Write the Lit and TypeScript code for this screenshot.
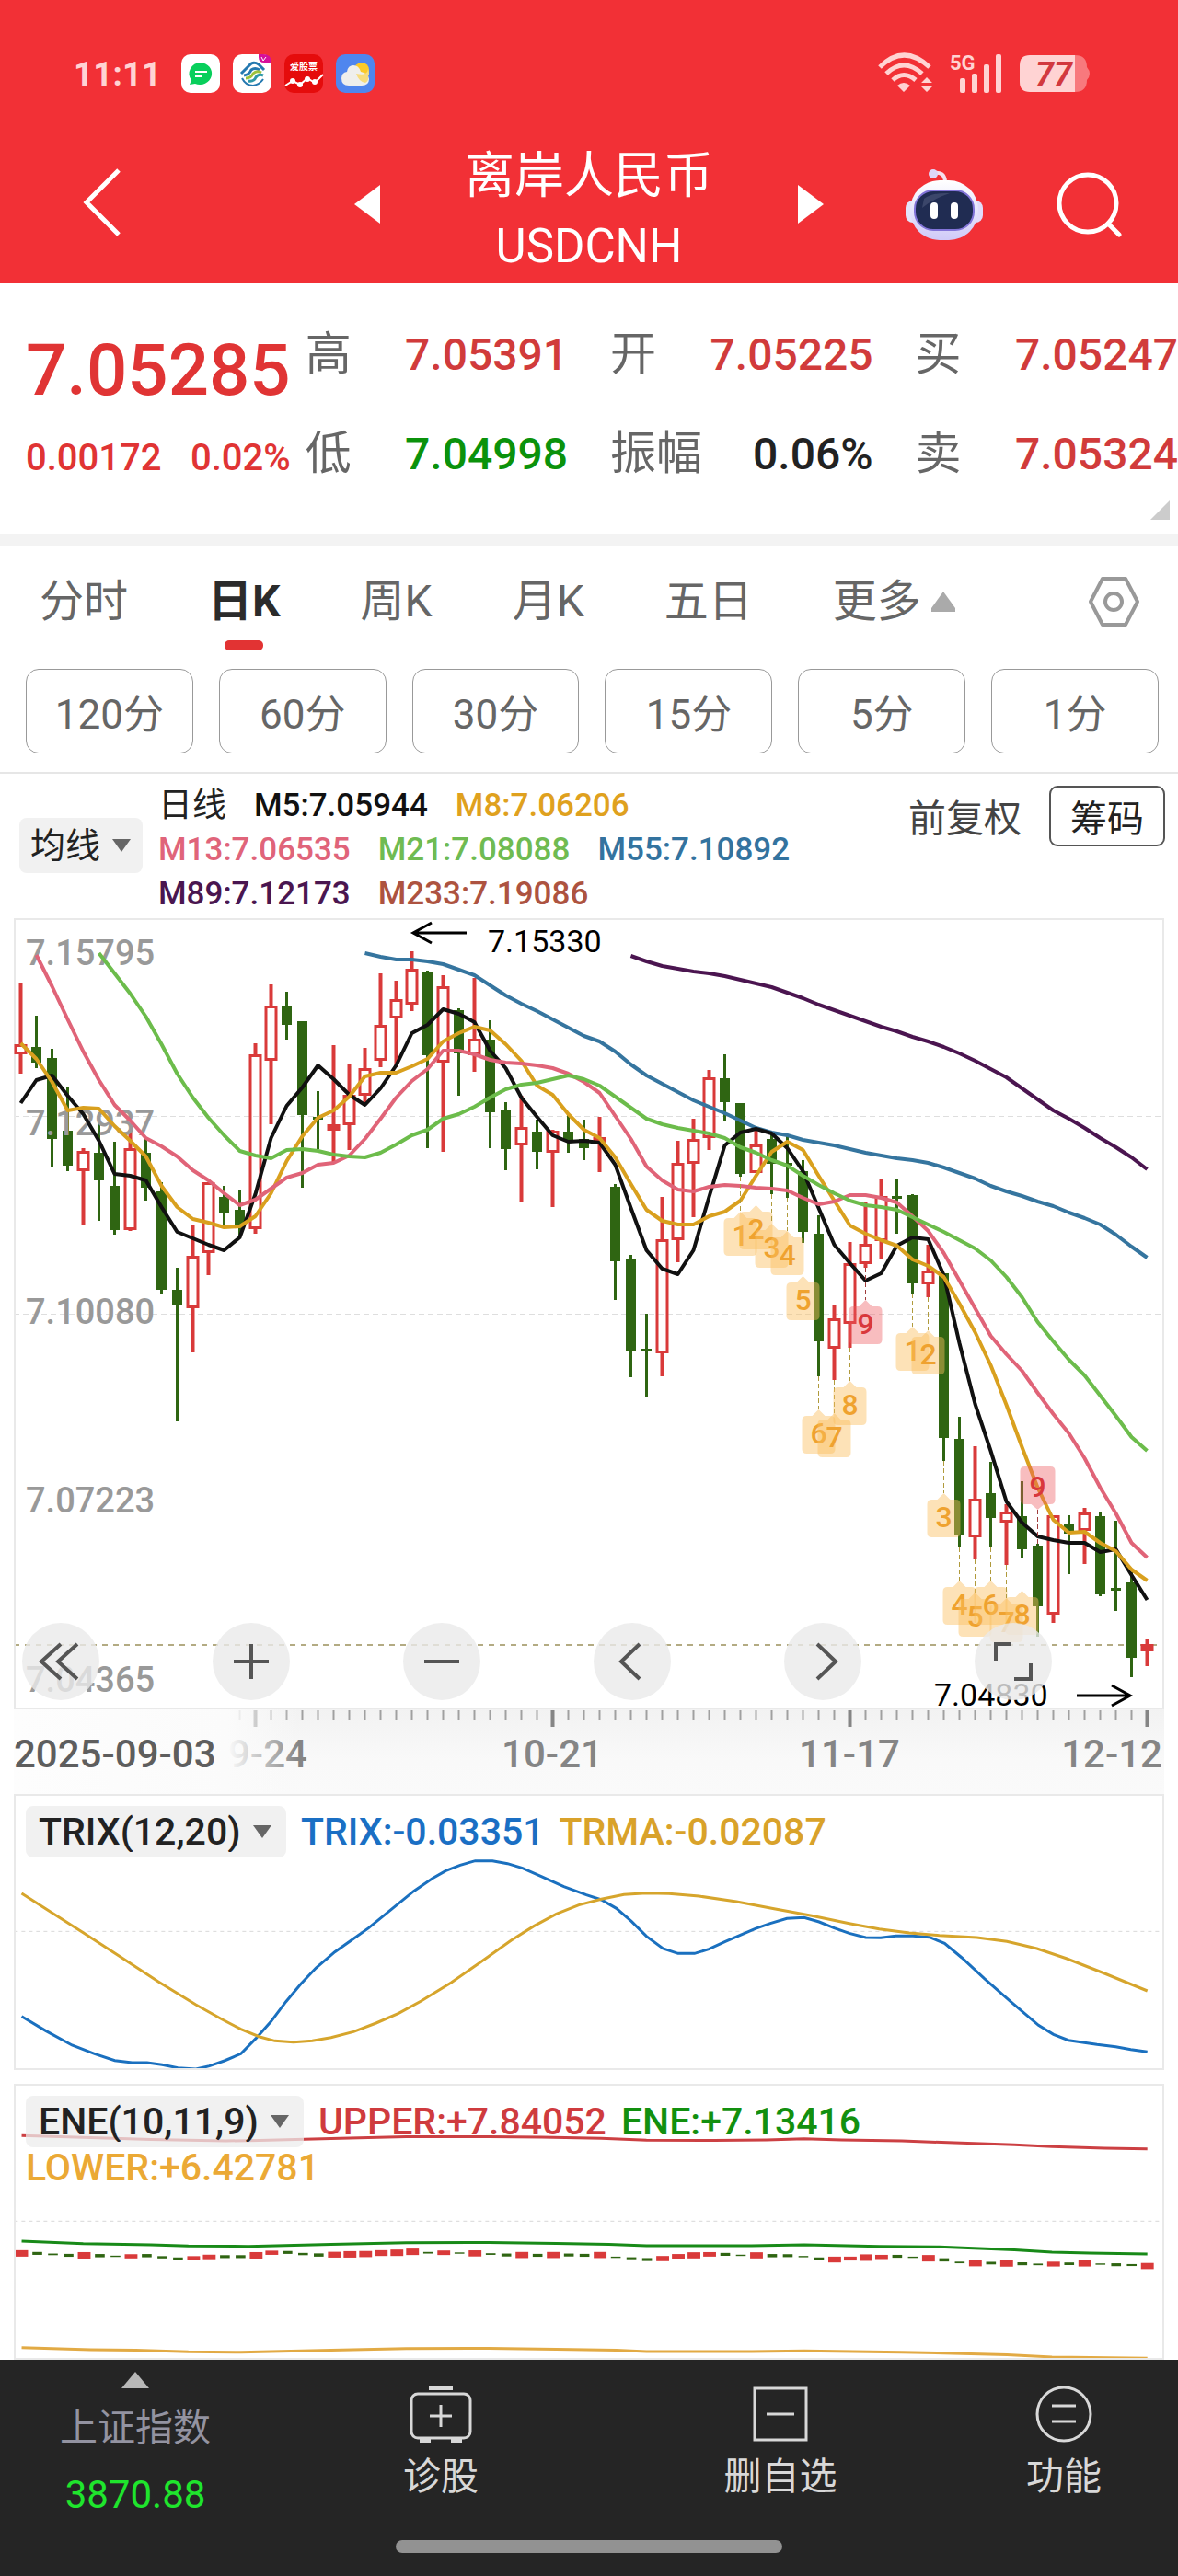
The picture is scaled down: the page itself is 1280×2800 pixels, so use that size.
import { LitElement, html, svg, css } from "lit";
import { customElement, state } from "lit/decorators.js";

type Candle = [kind: "r" | "g", high: number, top: number, bottom: number, low: number];

const STEP = 17;
const FIRST = 7.5;
const slotX = (i: number) => FIRST + STEP * i;

// Daily candles on the 1250 x 860 price canvas.
const CANDLES: Candle[] = [
  ["r", 70, 137, 148, 169], ["g", 106, 140, 157, 163], ["g", 142, 152, 240, 270], ["g", 184, 231, 269, 275],
  ["r", 250, 253, 275, 334], ["g", 223, 255, 285, 329], ["g", 243, 291, 339, 344], ["r", 230, 250, 339, 340],
  ["g", 240, 255, 293, 307], ["g", 287, 297, 404, 409], ["g", 380, 404, 421, 547], ["r", 333, 367, 424, 472],
  ["r", 287, 287, 364, 388], ["g", 291, 303, 320, 335], ["g", 295, 317, 335, 346], ["r", 136, 148, 338, 343],
  ["r", 72, 95, 155, 224], ["g", 80, 96, 116, 132], ["g", 112, 112, 214, 293], ["g", 188, 216, 219, 251],
  ["r", 138, 224, 231, 265], ["r", 158, 192, 225, 252], ["r", 141, 163, 193, 203], ["r", 60, 116, 155, 162],
  ["r", 68, 88, 109, 162], ["r", 36, 55, 94, 101], ["g", 57, 59, 149, 250], ["r", 62, 74, 157, 254],
  ["g", 98, 100, 147, 193], ["r", 65, 131, 149, 167], ["g", 111, 132, 211, 250], ["g", 200, 208, 251, 274],
  ["r", 193, 227, 247, 308], ["g", 219, 232, 254, 273], ["r", 230, 231, 255, 314], ["g", 213, 232, 242, 255],
  ["g", 219, 240, 250, 263], ["r", 216, 238, 244, 276], ["g", 289, 292, 373, 415], ["g", 366, 371, 471, 499],
  ["g", 430, 468, 471, 521], ["r", 303, 349, 473, 498], ["r", 242, 266, 350, 374], ["r", 218, 240, 267, 325],
  ["r", 165, 173, 239, 252], ["g", 148, 174, 200, 220], ["g", 201, 201, 278, 281], ["r", 230, 246, 277, 277],
  ["g", 235, 240, 267, 300], ["g", 237, 266, 269, 304], ["g", 263, 275, 341, 353], ["g", 323, 343, 460, 498],
  ["r", 420, 435, 468, 502], ["r", 352, 375, 441, 467], ["r", 308, 354, 376, 380], ["r", 283, 302, 351, 370],
  ["g", 283, 302, 305, 343], ["g", 300, 301, 397, 408], ["r", 355, 383, 398, 412], ["g", 386, 386, 565, 590],
  ["g", 542, 566, 670, 684], ["r", 574, 631, 673, 697], ["g", 591, 625, 652, 684], ["r", 637, 645, 657, 703],
  ["g", 612, 650, 686, 696], ["g", 680, 682, 748, 781], ["r", 649, 649, 757, 766], ["g", 649, 658, 669, 713],
  ["r", 641, 646, 666, 702], ["g", 646, 650, 735, 737], ["g", 655, 728, 731, 753], ["g", 711, 722, 804, 825],
  ["r", 783, 789, 797, 813],
];

interface Line { start: number; color: string; ys: number[] }

const LINES: Line[] = [
  { start: 39, color: "#4b1550", ys: [41, 47, 52, 55, 58, 60, 63, 67, 71, 75, 81, 87, 94, 100, 106, 112, 118, 123, 129, 134, 140, 147, 155, 164, 173, 185, 197, 209, 218, 228, 239, 249, 260, 273] },
  { start: 22, color: "#35759f", ys: [38, 42, 45, 45, 47, 50, 56, 62, 73, 84, 93, 101, 110, 119, 128, 134, 145, 159, 171, 180, 189, 198, 205, 212, 220, 228, 233, 236, 241, 244, 247, 251, 255, 258, 261, 263, 266, 271, 277, 283, 291, 297, 302, 308, 313, 320, 326, 333, 344, 357, 369] },
  { start: 0, color: "#111111", ys: [201, 176, 171, 193, 213, 242, 278, 280, 285, 314, 341, 348, 355, 361, 347, 300, 239, 204, 184, 160, 175, 192, 203, 185, 160, 125, 116, 99, 104, 113, 144, 163, 195, 216, 236, 243, 242, 244, 268, 315, 361, 381, 387, 361, 303, 247, 233, 229, 234, 250, 275, 315, 355, 375, 394, 386, 356, 347, 349, 388, 462, 528, 579, 634, 657, 672, 676, 679, 679, 689, 686, 714, 741] },
  { start: 0, color: "#d9a01e", ys: [136, 153, 178, 209, 206, 207, 226, 242, 259, 291, 314, 327, 331, 336, 335, 324, 299, 264, 237, 217, 209, 194, 172, 168, 168, 161, 153, 134, 125, 118, 122, 137, 155, 182, 192, 213, 230, 239, 260, 289, 317, 329, 333, 333, 324, 319, 307, 280, 254, 243, 252, 280, 307, 334, 343, 350, 356, 371, 378, 390, 419, 450, 486, 529, 575, 619, 654, 668, 667, 679, 688, 708, 720] },
  { start: 1, color: "#e06478", ys: [40, 74, 110, 145, 176, 203, 220, 239, 248, 259, 274, 285, 299, 312, 306, 294, 282, 277, 268, 266, 258, 240, 218, 195, 177, 164, 144, 144, 148, 154, 157, 158, 160, 163, 169, 178, 190, 215, 240, 270, 285, 295, 297, 292, 290, 291, 293, 294, 296, 304, 311, 308, 301, 301, 304, 309, 324, 340, 364, 394, 424, 454, 474, 492, 516, 539, 560, 587, 619, 647, 679, 695] },
  { start: 5, color: "#6cbc4b", ys: [38, 60, 82, 107, 137, 169, 195, 217, 236, 253, 258, 261, 252, 251, 253, 257, 259, 260, 255, 246, 236, 230, 218, 213, 205, 195, 186, 181, 179, 175, 171, 175, 182, 194, 206, 218, 224, 228, 231, 234, 239, 249, 255, 263, 269, 280, 290, 299, 307, 312, 314, 317, 325, 333, 341, 350, 359, 372, 390, 412, 439, 460, 480, 497, 519, 541, 564, 579] },
];

// Sequence counters hung below their candles: slot, tip y, number.
const TAGS: [number, number, number][] = [
  [46, 319, 1], [47, 312, 2], [48, 332, 3], [49, 340, 4], [50, 389, 5], [51, 534, 6], [52, 538, 7], [53, 503, 8],
  [57, 444, 1], [58, 448, 2], [59, 625, 3], [60, 720, 4], [61, 733, 5], [62, 720, 6], [63, 739, 7], [64, 731, 8],
];

const PRICE_LABELS: [string, number][] = [
  ["7.15795", 51], ["7.12937", 236], ["7.10080", 441], ["7.07223", 646], ["7.04365", 841],
];

const TRIX = "28,758 60,805 95,852 125,880 152,902 175,909 195,909 215,916 236,926 260,930 278,920 298,903 320,880 340,830 360,775 380,710 400,652 420,600 445,548 470,505 490,470 520,410 550,350 575,308 593,283 612,265 632,251 655,251 675,260 695,275 720,302 750,335 780,362 800,378 820,406 840,448 860,497 882,537 902,553 924,553 943,539 965,514 985,493 1005,472 1025,455 1047,439 1070,436 1090,450 1110,470 1130,487 1152,501 1172,502 1192,496 1215,496 1237,500 1257,520 1280,567 1310,635 1345,710 1382,787 1402,817 1422,836 1460,850 1485,857 1505,866 1527,874";
const TRMA = "28,357 60,407 110,485 160,565 210,645 260,720 295,768 320,800 345,825 365,838 390,842 415,838 440,827 470,808 500,780 530,748 560,708 600,648 640,580 680,510 710,464 740,424 770,395 800,376 830,361 860,356 890,358 930,366 980,384 1030,407 1080,430 1130,455 1170,473 1210,486 1250,494 1300,501 1340,514 1380,537 1420,570 1470,618 1527,675";
const UPPER = "28,206 130,213 200,218 300,222 345,221 440,215 540,209 650,209 720,211 800,214 860,220 950,221 1020,219 1070,216 1120,219 1200,222 1270,228 1350,234 1400,240 1470,245 1527,247";
const ENE = "28,533 110,541 200,544 250,548 330,549 440,543 540,538 650,537 740,540 810,543 860,547 1000,547 1070,544 1170,549 1250,551 1350,560 1400,567 1450,570 1527,573";
const LOWER = "28,863 120,869 180,871 250,876 320,877 440,871 540,866 650,865 740,868 820,871 860,875 1000,875 1070,873 1200,877 1340,885 1400,892 1527,896";

// Compressed candles of the ENE panel: centre and height, coloured like the daily candles.
const ENE_BARS: [number, number][] = [
  [571, 20], [571, 9], [574, 5], [577, 9], [577, 20], [578, 10], [580, 4], [580, 13], [578, 10], [583, 7],
  [588, 9], [586, 13], [582, 14], [581, 9], [581, 9], [577, 20], [569, 13], [568, 9], [573, 7], [576, 10],
  [575, 18], [574, 20], [573, 19], [570, 18], [569, 20], [566, 20], [569, 5], [569, 14], [570, 4], [571, 19],
  [573, 5], [576, 9], [576, 19], [577, 9], [576, 19], [576, 9], [577, 9], [576, 19], [583, 4], [586, 6],
  [590, 9], [587, 16], [580, 14], [577, 19], [574, 14], [574, 9], [577, 4], [577, 19], [578, 10], [578, 9],
  [581, 4], [587, 7], [590, 18], [587, 12], [584, 20], [582, 13], [580, 9], [583, 4], [586, 20], [591, 10],
  [599, 5], [601, 20], [601, 8], [602, 20], [603, 9], [605, 5], [604, 15], [603, 8], [602, 19], [604, 4],
  [606, 9], [607, 6], [610, 19],
];

const RED = "#d93a3a";
const GREEN = "#2f6512";

const FONT = css`Roboto, "Noto Sans CJK SC", sans-serif`;

@customElement("price-chart")
export class PriceChart extends LitElement {
  static styles = css`
    :host { display: block; font-family: ${FONT}; }
    .canvas { position: relative; }
    .plot, .axis { display: block; width: 100%; height: auto; overflow: visible; }
    .scale { font-size: 38px; font-weight: 500; fill: #999; }
    .mark { font-size: 34px; fill: #000; }
    .tag { font-size: 32px; font-weight: 500; text-anchor: middle; }
    .date { font-size: 42px; font-weight: 500; fill: #858585; }
    .from { fill: #5e5e5e; }
    .tools {
      position: absolute; left: 0; right: 0; bottom: 10px;
      display: flex; justify-content: space-between; padding: 0 122px 0 9px;
    }
    .tool {
      width: 84px; height: 84px; padding: 0; border: 0; border-radius: 50%;
      background: rgba(234, 234, 234, 0.8); display: grid; place-items: center;
    }
    .glyph { width: 84px; height: 84px; fill: none; stroke: #555; stroke-width: 4; }
  `;

  private candle([kind, high, top, bottom, low]: Candle, i: number) {
    const x = slotX(i);
    if (kind === "g") {
      return svg`<path d="M${x} ${high}V${low}" stroke=${GREEN} stroke-width="3"/>
        <rect x=${x - 5.5} y=${top} width="11" height=${bottom - top} fill=${GREEN}/>`;
    }
    if (bottom - top < 9) {
      return svg`<path d="M${x} ${high}V${low}" stroke=${RED} stroke-width="4"/>
        <rect x=${x - 7} y=${top} width="14" height=${bottom - top} fill=${RED}/>`;
    }
    return svg`<path d="M${x} ${high}V${top}M${x} ${bottom}V${low}" stroke=${RED} stroke-width="4"/>
      <rect x=${x - 5.5} y=${top + 1.5} width="11" height=${bottom - top - 3} fill="none" stroke=${RED} stroke-width="3"/>`;
  }

  private line({ start, color, ys }: Line) {
    const points = ys.map((y, k) => `${slotX(start + k)},${y}`).join(" ");
    return svg`<polyline points=${points} fill="none" stroke=${color} stroke-width="4" stroke-linejoin="round"/>`;
  }

  private tagBelow(i: number, tip: number, n: number, hot: boolean) {
    const x = slotX(i);
    const ink = hot ? "#d9383c" : "#efa22f";
    const fill = hot ? "rgba(238,90,96,.4)" : "rgba(250,190,96,.45)";
    return svg`<path d="M${x} ${CANDLES[i][4]}V${tip}" stroke=${hot ? "#a03c3c" : "#b09a3c"} stroke-width="1" stroke-dasharray="5 3"/>
      <path d="M${x} ${tip}l7 7h6q5 0 5 5v31q0 5 -5 5h-26q-5 0 -5 -5v-31q0 -5 5 -5h6z" fill=${fill}/>
      <text class="tag" x=${x} y=${tip + 37} fill=${ink}>${n}</text>`;
  }

  render() {
    const top9 = slotX(65);
    const ticks = Array.from({ length: 60 }, (_, k) => k + 13);
    return html`
      <div class="canvas">
        <svg class="plot" viewBox="0 0 1250 860" role="img" aria-label="日K">
          <g stroke="#dedede" stroke-width="1" stroke-dasharray="6 4">
            <path d="M0 215.5H1250M0 430.5H1250M0 645.5H1250"/>
          </g>
          <path d="M0 790H1250" stroke="#b3ab83" stroke-width="2" stroke-dasharray="6 6"/>
          <rect x="1" y="1" width="1248" height="858" fill="none" stroke="#e9e9e9" stroke-width="2"/>
          ${CANDLES.map((c, i) => this.candle(c, i))}
          ${PRICE_LABELS.map(([t, y]) => svg`<text class="scale" x="13" y=${y}>${t}</text>`)}
          ${LINES.map((l) => this.line(l))}
          ${TAGS.map(([i, tip, n]) => this.tagBelow(i, tip, n, false))}
          ${this.tagBelow(54, 415, 9, true)}
          <path d="M${top9} 643V680" stroke="#a03c3c" stroke-width="1" stroke-dasharray="5 3"/>
          <path d="M${top9} 643l-7 -6h-7q-5 0 -5 -5v-31q0 -5 5 -5h28q5 0 5 5v31q0 5 -5 5h-7z" fill="rgba(238,90,96,.4)"/>
          <text class="tag" x=${top9} y="629" fill="#d9383c">9</text>
          <path d="M492 16H434M454 5L434 16L454 27" fill="none" stroke="#000" stroke-width="3"/>
          <text class="mark" x="515" y="37">7.15330</text>
          <path d="M1155 845H1213M1193 834L1213 845L1193 856" fill="none" stroke="#000" stroke-width="3"/>
          <text class="mark" x="1000" y="856">7.04830</text>
        </svg>
        <div class="tools">
          <button class="tool" aria-label="最早"><svg class="glyph" viewBox="0 0 84 84"><path d="M42 23L21 42L42 61M60 23L39 42L60 61"/></svg></button>
          <button class="tool" aria-label="放大"><svg class="glyph" viewBox="0 0 84 84"><path d="M42 23V61M23 42H61"/></svg></button>
          <button class="tool" aria-label="缩小"><svg class="glyph" viewBox="0 0 84 84"><path d="M23 42H61"/></svg></button>
          <button class="tool" aria-label="左移"><svg class="glyph" viewBox="0 0 84 84"><path d="M50 23L30 42L50 61"/></svg></button>
          <button class="tool" aria-label="右移"><svg class="glyph" viewBox="0 0 84 84"><path d="M36 23L56 42L36 61"/></svg></button>
          <button class="tool" aria-label="全屏"><svg class="glyph" viewBox="0 0 84 84"><path d="M40 23H23V41M61 44V61H43"/></svg></button>
        </div>
      </div>
      <svg class="axis" viewBox="0 0 1250 92" role="img" aria-label="日期">
        <defs>
          <linearGradient id="shade" x1="0" y1="0" x2="0" y2="1">
            <stop offset="0" stop-color="#f2f2f2"/><stop offset="0.6" stop-color="#f9f9f9"/><stop offset="1" stop-color="#fafafa"/>
          </linearGradient>
          <linearGradient id="veil" x1="0" y1="0" x2="1" y2="0">
            <stop offset="0" stop-color="#fdfdfd"/><stop offset="0.75" stop-color="#fbfbfb"/><stop offset="1" stop-color="#fafafa" stop-opacity="0"/>
          </linearGradient>
        </defs>
        <rect width="1250" height="92" fill="url(#shade)"/>
        ${ticks.map((i) => {
          const major = (i - 15) % 19 === 0;
          return svg`<path d="M${slotX(i)} 1V${major ? 19 : 12}" stroke=${major ? "#858585" : "#a0a0a0"} stroke-width=${major ? 4 : 2}/>`;
        })}
        <text class="date" x="264" y="63" text-anchor="middle">09-24</text>
        <text class="date" x="585" y="63" text-anchor="middle">10-21</text>
        <text class="date" x="908" y="63" text-anchor="middle">11-17</text>
        <text class="date" x="1248" y="63" text-anchor="end">12-12</text>
        <rect width="310" height="92" fill="url(#veil)"/>
        <text class="date from" x="0" y="63">2025-09-03</text>
      </svg>
    `;
  }
}

@customElement("indicator-panel")
export class IndicatorPanel extends LitElement {
  static properties = { name: {}, values: { attribute: false } };
  declare name: string;
  declare values: { text: string; color: string }[];

  static styles = css`
    :host { display: block; font-family: ${FONT}; }
    .panel { display: grid; box-sizing: border-box; border: 2px solid #e9e9e9; height: 300px; }
    .drawing { grid-area: 1 / 1; min-height: 0; min-width: 0; overflow: hidden; }
    .legend {
      grid-area: 1 / 1; align-self: start; position: relative;
      display: flex; flex-wrap: wrap; align-items: center; column-gap: 16px; padding: 11px;
      font-size: 41px; line-height: 44px; font-weight: 500; color: #222;
    }
    .choice { display: flex; align-items: center; gap: 13px; height: 56px; padding: 0 16px 0 14px; border-radius: 8px; background: rgba(236, 236, 236, 0.75); }
    .select { appearance: none; border: 0; padding: 0; margin: 0; background: none; font: inherit; color: inherit; }
    .arrow { width: 20px; height: 14px; fill: #666; }
  `;

  render() {
    return html`
      <section class="panel">
        <div class="drawing"><slot></slot></div>
        <div class="legend">
          <label class="choice">
            <select class="select" aria-label="指标"><option>${this.name}</option></select>
            <svg class="arrow" viewBox="0 0 20 14"><path d="M0 0H20L10 14Z"/></svg>
          </label>
          ${this.values.map((v) => html`<span style="color:${v.color}">${v.text}</span>`)}
        </div>
      </section>
    `;
  }
}

@customElement("app-root")
export class AppRoot extends LitElement {
  @state() private tab = 1;

  static styles = css`
    :host { display: flex; flex-direction: column; min-height: 100vh; background: #fff; color: #222; font-family: ${FONT}; }
    button, select { font-family: inherit; }
    button { background: none; border: 0; padding: 0; margin: 0; color: inherit; }
    svg { display: block; overflow: visible; }

    .top { background: #f23036; color: #fff; }
    .status { display: flex; justify-content: space-between; align-items: center; height: 112px; padding: 24px 96px 0 80px; color: #ffd3d3; }
    .cluster { display: flex; align-items: center; gap: 14px; }
    .signals { gap: 18px; }
    .clock { font-size: 37px; font-weight: 700; margin-right: 8px; }
    .app { width: 42px; height: 42px; }
    .nav { display: grid; grid-template-columns: minmax(0, 1fr) auto minmax(0, 1fr); align-items: center; height: 172px; }
    .lead { padding-left: 90px; }
    .trail { display: flex; align-items: center; justify-content: flex-end; gap: 80px; padding-right: 61px; }
    .symbol { display: flex; align-items: center; gap: 92px; }
    .title { margin: 0; padding-top: 16px; text-align: center; font-weight: 400; font-size: 54px; line-height: 76px; }
    .code { display: block; font-size: 51px; }

    .quote { display: flex; gap: 16px; padding: 23px 0 33px 28px; border-bottom: 14px solid #f3f3f3; position: relative; }
    .last { flex: none; color: #e03434; font-weight: 500; }
    .price { font-size: 78px; line-height: 144px; }
    .change { display: flex; justify-content: space-between; font-size: 40px; line-height: 46px; }
    .stats { flex: 1; display: grid; grid-template-columns: repeat(3, 1fr); column-gap: 46px; margin: 0; }
    .stat { display: flex; justify-content: space-between; align-items: center; height: 108px; white-space: nowrap; }
    .stat dt { font-size: 50px; line-height: 72px; color: #666; }
    .stat dd { margin: 0; font-size: 48px; font-weight: 500; color: #222; }
    .stat .up { color: #d13b3b; }
    .stat .down { color: #0b920b; }
    .corner { position: absolute; right: 9px; bottom: 15px; }

    .periods { display: flex; align-items: center; gap: 87px; padding: 0 41px 0 43px; height: 116px; margin-top: 2px; }
    .period { position: relative; font-size: 48px; line-height: 70px; color: #666; display: flex; align-items: center; gap: 11px; white-space: nowrap; }
    .active { color: #2b2b2b; font-weight: 700; }
    .active::after { content: ""; position: absolute; left: 50%; bottom: -18px; width: 42px; height: 11px; margin-left: -21px; border-radius: 5px; background: #e23333; }
    .settings { margin-left: auto; }

    .minutes { display: grid; grid-template-columns: repeat(6, 1fr); gap: 28px; padding: 15px 21px 20px 28px; border-bottom: 2px solid #e6e6e6; }
    .minute { height: 92px; border: 1px solid #999; border-radius: 14px; font-size: 44px; color: #666; }

    .averages { display: flex; align-items: flex-start; gap: 17px; padding: 11px 14px 2px 21px; }
    .choice { display: flex; align-items: center; gap: 12px; height: 60px; margin-top: 37px; padding: 0 13px 0 12px; border-radius: 8px; background: #f1f1f1; }
    .select { appearance: none; border: 0; padding: 0; margin: 0; background: none; font-size: 38px; color: #222; }
    .legend { font-size: 35px; line-height: 48px; font-weight: 500; }
    .row { display: flex; gap: 30px; }
    .term { font-size: 37px; font-weight: 400; }
    .rights { display: flex; align-items: center; gap: 30px; margin-left: auto; }
    .adjust { color: #444; font-size: 41px; }
    .chips { height: 66px; margin-top: 2px; padding: 0 21px; border: 2px solid #555; border-radius: 9px; font-size: 40px; color: #222; }

    .charts { padding: 0 15px; flex: 1; }
    .ene { margin-top: 15px; }
    .curve { width: 100%; height: 296px; fill: none; stroke-width: 3; }

    .dock { background: #252525; color: #d8d8d8; height: 235px; display: flex; flex-direction: column; align-items: center; justify-content: space-between; }
    .actions { width: 100%; display: grid; grid-template-columns: 294fr 370fr 368fr 248fr; }
    .action { display: flex; flex-direction: column; align-items: center; font-size: 41px; line-height: 60px; padding-top: 28px; gap: 7px; }
    .index { padding-top: 13px; gap: 13px; color: #9393a1; }
    .level { color: #1fe52d; font-size: 42px; }
    .icon { fill: none; stroke: #d8d8d8; stroke-width: 3; }
    .home { width: 420px; height: 14px; border-radius: 7px; background: #929292; margin-bottom: 25px; }
  `;

  private stat(label: string, value: string, tone = "") {
    return html`<div class="stat"><dt>${label}</dt><dd class=${tone}>${value}</dd></div>`;
  }

  render() {
    const tabs = ["分时", "日K", "周K", "月K", "五日"];
    return html`
      <header class="top">
        <div class="status">
          <div class="cluster">
            <span class="clock">11:11</span>
            <svg class="app" viewBox="0 0 42 42"><rect width="42" height="42" rx="10" fill="#fff"/><path d="M21 9a13 12 0 1 1-6 23l-6 1 2-5A13 12 0 0 1 21 9Z" fill="#08cf5b"/><path d="M15 19H28M15 24H23" stroke="#fff" stroke-width="2"/></svg>
            <svg class="app" viewBox="0 0 42 42"><rect width="42" height="42" rx="10" fill="#fff"/><g fill="none" stroke-width="3"><path d="M9 21L18 12Q22 7 28 11L34 17" stroke="#2478b0"/><path d="M12 23Q18 22 20 17Q24 14 29 17" stroke="#2478b0"/><path d="M14 26Q20 26 22 21Q26 17 31 20" stroke="#9cc23c"/><path d="M17 29Q23 30 25 25Q28 21 33 23" stroke="#2e98a8"/><path d="M10 26Q14 34 22 34Q29 33 33 27" stroke="#2478b0" stroke-width="2"/></g><path d="M28 0H33Q42 0 42 9H34Q28 9 28 3Z" fill="#d6109a"/><path d="M31 3L33 7L36 3" stroke="#fff" fill="none"/></svg>
            <svg class="app" viewBox="0 0 42 42"><rect width="42" height="42" rx="10" fill="#e50c0c"/><text x="21" y="17" font-size="10" font-weight="700" text-anchor="middle" fill="#fff">爱股票</text><path d="M1 34L9 29L17 33L25 26L33 31L42 22" fill="none" stroke="#fff" stroke-width="2"/><g fill="#fff"><circle cx="9" cy="29" r="3"/><circle cx="17" cy="33" r="3"/><circle cx="25" cy="27" r="3"/><circle cx="33" cy="30" r="3"/></g></svg>
            <svg class="app" viewBox="0 0 42 42"><rect width="42" height="42" rx="10" fill="#4f86ee"/><circle cx="28" cy="17" r="8" fill="#fbc928"/><path d="M14 34Q6 34 6 26Q6 20 12 19Q13 12 19 12Q25 12 27 19Q36 21 36 27Q36 34 28 34Z" fill="#efefec"/><path d="M22 21Q34 24 35 16Q37 21 35 24Q36 29 32 31Q25 30 22 21Z" fill="#f7dc7c"/></svg>
          </div>
          <div class="cluster signals">
            <svg width="60" height="44" viewBox="0 0 60 44" fill="none" stroke="#ffd3d3" stroke-width="5"><path d="M2 15Q28 -11 56 15M9 22Q28 4 48 22M16 29Q28 18 41 29"/><path d="M28 42L21 35Q28 29 35 35ZM53 26L59 32H47ZM53 42L47 36H59Z" fill="#ffd3d3" stroke="none"/></svg>
            <svg width="58" height="44" viewBox="0 0 58 44" fill="#ffd3d3"><text x="0" y="18" font-size="22" font-weight="700">5G</text><rect x="11" y="27" width="6" height="16" rx="2"/><rect x="24" y="22" width="6" height="21" rx="2"/><rect x="37" y="12" width="6" height="31" rx="2"/><rect x="50" y="1" width="6" height="42" rx="2"/></svg>
            <svg width="76" height="42" viewBox="0 0 76 42"><path d="M60 1Q73 1 73 14Q79 21 73 28Q73 41 60 41Z" fill="#f8797d"/><path d="M11 1H60V41H11Q0 41 0 30V12Q0 1 11 1Z" fill="#ffd3d3"/><text x="37" y="34" font-size="36" font-weight="700" font-style="italic" text-anchor="middle" fill="#d2383e">77</text></svg>
          </div>
        </div>
        <nav class="nav">
          <div class="lead"><button aria-label="返回"><svg width="42" height="76" viewBox="0 0 42 76" fill="none" stroke="#fff" stroke-width="5"><path d="M39 3L4 38L39 73"/></svg></button></div>
          <div class="symbol">
            <button aria-label="上一个"><svg width="28" height="42" viewBox="0 0 28 42" fill="#fff"><path d="M28 0V42L0 21Z"/></svg></button>
            <h1 class="title">离岸人民币<span class="code">USDCNH</span></h1>
            <button aria-label="下一个"><svg width="28" height="42" viewBox="0 0 28 42" fill="#fff"><path d="M0 0V42L28 21Z"/></svg></button>
          </div>
          <div class="trail">
            <button aria-label="助手"><svg width="84" height="80" viewBox="0 0 84 80">
              <defs><linearGradient id="shell" x1="0" y1="0" x2="0" y2="1"><stop offset="0" stop-color="#fff"/><stop offset="1" stop-color="#cfcaf8"/></linearGradient></defs>
              <path d="M30 6Q42 4 43 15" fill="none" stroke="#f6dfee" stroke-width="4"/><circle cx="30" cy="7" r="5" fill="#ded7fa"/>
              <rect x="0" y="36" width="16" height="24" rx="8" fill="#e2e4fa"/><rect x="68" y="36" width="16" height="24" rx="8" fill="#e2dcfa"/>
              <rect x="5" y="14" width="74" height="65" rx="32" fill="url(#shell)"/>
              <rect x="10" y="25" width="64" height="43" rx="20" fill="#202c52" stroke="#8274d8" stroke-width="2"/>
              <path d="M20 34Q30 27 48 28Q30 34 18 44Z" fill="#3b466a"/>
              <rect x="27" y="38" width="8" height="18" rx="4" fill="#fff"/><rect x="49" y="38" width="8" height="18" rx="4" fill="#fff"/>
            </svg></button>
            <button aria-label="搜索"><svg width="71" height="70" viewBox="0 0 71 70" fill="none" stroke="#fff" stroke-width="5"><circle cx="34" cy="34" r="31"/><path d="M56 56L68 68" stroke-linecap="round"/></svg></button>
          </div>
        </nav>
      </header>

      <section class="quote">
        <div class="last">
          <div class="price">7.05285</div>
          <div class="change"><span>0.00172</span><span>0.02%</span></div>
        </div>
        <dl class="stats">
          ${this.stat("高", "7.05391", "up")}${this.stat("开", "7.05225", "up")}${this.stat("买", "7.05247", "up")}
          ${this.stat("低", "7.04998", "down")}${this.stat("振幅", "0.06%")}${this.stat("卖", "7.05324", "up")}
        </dl>
        <svg class="corner" width="21" height="21" viewBox="0 0 21 21" fill="#ccc"><path d="M21 0V21H0Z"/></svg>
      </section>

      <nav class="periods">
        ${tabs.map((t, i) => html`<button class="period ${i === this.tab ? "active" : ""}" @click=${() => (this.tab = i)}>${t}</button>`)}
        <button class="period">更多<svg width="26" height="22" viewBox="0 0 26 22" fill="#aaa"><path d="M13 0L26 18V22H0V18Z"/></svg></button>
        <button class="settings" aria-label="设置"><svg width="57" height="56" viewBox="0 0 57 56" fill="none" stroke="#999" stroke-width="4" stroke-linejoin="round"><path d="M16 3H41L54 28L41 53H16L3 28Z"/><circle cx="28" cy="28" r="9"/></svg></button>
      </nav>

      <div class="minutes">
        ${["120分", "60分", "30分", "15分", "5分", "1分"].map((m) => html`<button class="minute">${m}</button>`)}
      </div>

      <section class="averages">
        <label class="choice">
          <select class="select" aria-label="指标"><option>均线</option></select>
          <svg width="20" height="14" viewBox="0 0 20 14" fill="#666"><path d="M0 0H20L10 14Z"/></svg>
        </label>
        <div class="legend">
          <div class="row"><span class="term">日线</span><span style="color:#111">M5:7.05944</span><span style="color:#dfa11e">M8:7.06206</span></div>
          <div class="row"><span style="color:#e0647a">M13:7.06535</span><span style="color:#6fbb52">M21:7.08088</span><span style="color:#33739f">M55:7.10892</span></div>
          <div class="row"><span style="color:#4a1650">M89:7.12173</span><span style="color:#ad5340">M233:7.19086</span></div>
        </div>
        <div class="rights">
          <button class="adjust">前复权</button>
          <button class="chips">筹码</button>
        </div>
      </section>

      <main class="charts">
        <price-chart></price-chart>
        <indicator-panel .name=${"TRIX(12,20)"} .values=${[
          { text: "TRIX:-0.03351", color: "#1a6fc4" },
          { text: "TRMA:-0.02087", color: "#d9a22a" },
        ]}>
          <svg class="curve" viewBox="20 39 1527 888" preserveAspectRatio="none">
            <path d="M18 481H1549" stroke="#d8d8d8" stroke-width="1" stroke-dasharray="4 4" vector-effect="non-scaling-stroke"/>
            <polyline points=${TRIX} stroke="#1a70bf" vector-effect="non-scaling-stroke"/>
            <polyline points=${TRMA} stroke="#d6a52c" vector-effect="non-scaling-stroke"/>
          </svg>
        </indicator-panel>
        <indicator-panel class="ene" .name=${"ENE(10,11,9)"} .values=${[
          { text: "UPPER:+7.84052", color: "#cf3b3e" },
          { text: "ENE:+7.13416", color: "#12900f" },
          { text: "LOWER:+6.42781", color: "#eba935" },
        ]}>
          <svg class="curve" viewBox="20 51 1527 844" preserveAspectRatio="none">
            <path d="M18 471H1549" stroke="#d8d8d8" stroke-width="1" stroke-dasharray="4 4" vector-effect="non-scaling-stroke"/>
            ${ENE_BARS.map(([c, h], i) => {
              const red = CANDLES[i][0] === "r";
              const w = red ? 17 : 13;
              return svg`<rect x=${28 + 20.82 * i - w / 2} y=${c - h / 2} width=${w} height=${h} fill=${red ? RED : GREEN}/>`;
            })}
            <polyline points=${UPPER} stroke="#cc4043" vector-effect="non-scaling-stroke"/>
            <polyline points=${ENE} stroke="#188a18" vector-effect="non-scaling-stroke"/>
            <polyline points=${LOWER} stroke="#e2aa44" vector-effect="non-scaling-stroke"/>
          </svg>
        </indicator-panel>
      </main>

      <footer class="dock">
        <div class="actions">
          <button class="action index">
            <svg width="30" height="18" viewBox="0 0 30 18" fill="#b8b8b8"><path d="M15 0L30 18H0Z"/></svg>
            <span>上证指数</span><span class="level">3870.88</span>
          </button>
          <button class="action">
            <svg class="icon" width="68" height="62" viewBox="0 0 68 62"><path d="M21 3H47" stroke-width="4"/><rect x="2" y="9" width="64" height="48" rx="7"/><path d="M34 21V45M22 33H46"/><path d="M11 60H23M45 60H57" stroke-width="4"/></svg>
            <span>诊股</span>
          </button>
          <button class="action">
            <svg class="icon" width="62" height="62" viewBox="0 0 62 62"><rect x="3" y="3" width="56" height="56"/><path d="M16 31H46"/></svg>
            <span>删自选</span>
          </button>
          <button class="action">
            <svg class="icon" width="62" height="62" viewBox="0 0 62 62"><circle cx="31" cy="31" r="29"/><path d="M18 22H44M18 39H44"/></svg>
            <span>功能</span>
          </button>
        </div>
        <div class="home"></div>
      </footer>
    `;
  }
}
